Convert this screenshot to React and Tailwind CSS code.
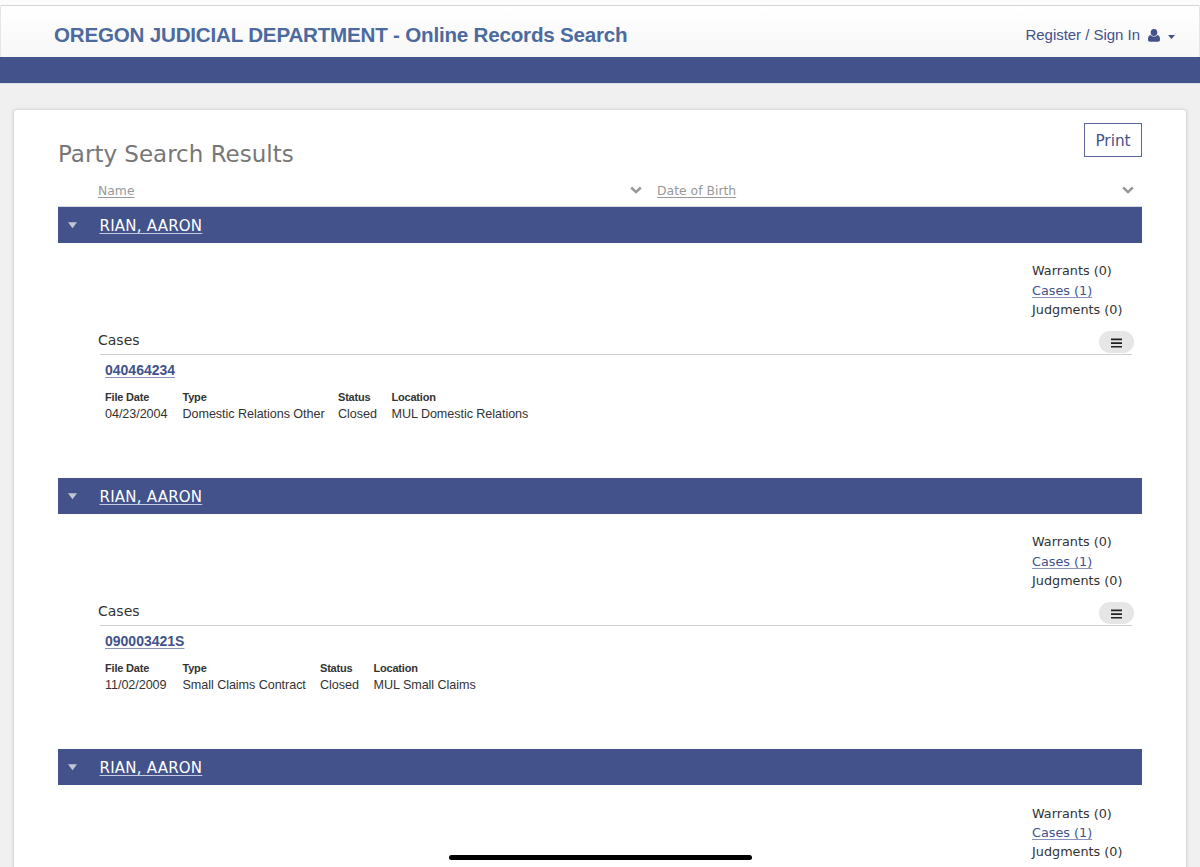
const helv = "font-['Liberation_Sans',Arial,sans-serif]";
const verd = "font-['DejaVu_Sans',Verdana,sans-serif]";

const parties = [
  {
    name: "RIAN, AARON",
    number: "040464234",
    fields: [
      ["File Date", "04/23/2004", "w-[77.5px]"],
      ["Type", "Domestic Relations Other", "w-[155.5px]"],
      ["Status", "Closed", "w-[53.5px]"],
      ["Location", "MUL Domestic Relations", "w-[160px]"],
    ],
  },
  {
    name: "RIAN, AARON",
    number: "090003421S",
    fields: [
      ["File Date", "11/02/2009", "w-[77.5px]"],
      ["Type", "Small Claims Contract", "w-[137.5px]"],
      ["Status", "Closed", "w-[53.5px]"],
      ["Location", "MUL Small Claims", "w-[160px]"],
    ],
  },
  { name: "RIAN, AARON" },
];

function UserIcon() {
  return (
    <svg className="ml-2 h-[13px] w-3 shrink-0" viewBox="0 0 12 13" fill="#43528a">
      <ellipse cx="6" cy="3.500" rx="3.300" ry="3.500" />
      <path d="M2.500 5.900C4.500 8.100 7.500 8.100 9.500 5.900 11.400 6.300 12 8.200 12 10.600 12 12 11.200 12.800 10 12.800H2C.8 12.800 0 12 0 10.600 0 8.200.6 6.300 2.500 5.900z" />
    </svg>
  );
}

function Chevron() {
  return (
    <svg className="-mt-px h-2 w-3 shrink-0" viewBox="0 0 12 8" fill="none" stroke="#979797" strokeWidth="2.5">
      <path d="M1.200 1.500 6 6.100l4.800-4.600" />
    </svg>
  );
}

function Party({ party }) {
  return (
    <section className="h-[271.200px] shrink-0">
      <div className="flex h-9 items-center bg-[#43528a] pl-2.5">
        <svg className="h-[7px] w-[9px]" viewBox="0 0 9 7">
          <path d="M0 .2h9L4.500 6.200z" fill="#c3c6d3" />
        </svg>
        <a className={`${verd} mt-0.5 ml-[22.5px] text-[15px] leading-5 tracking-[0.23px] whitespace-nowrap text-white underline decoration-[#c5cae0] decoration-1 underline-offset-2`}>
          {party.name}
        </a>
      </div>
      <div className={`${verd} ml-[974px] pt-[18.300px] text-[12.800px] leading-[19.3px] whitespace-nowrap text-[#333]`}>
        <div>Warrants (0)</div>
        <div>
          <a className="text-[#43528a] underline decoration-[#8a95bd] decoration-1 underline-offset-2">Cases (1)</a>
        </div>
        <div>Judgments (0)</div>
      </div>
      {party.number && (
        <div className="mt-[11.700px] ml-10">
          <div className="mr-2 flex h-[22px] items-start justify-between">
            <h2 className={`${verd} text-[14px] leading-[19px] text-[#333]`}>Cases</h2>
            <button className="flex h-[22px] w-[35px] items-center justify-center rounded-full bg-[#e6e6e6] pt-0.5">
              <svg className="h-[10px] w-[11px]" viewBox="0 0 11 10" fill="#222">
                <path d="M0 .5h11v1.700H0zM0 4.200h11v1.700H0zM0 7.900h11v1.700H0z" />
              </svg>
            </button>
          </div>
          <div className="mt-px mr-2.5 ml-0.5 h-px bg-[#cdd1cf]" />
          <div className={`${helv} ml-[7px]`}>
            <div className="pt-[7px] text-sm leading-4 font-bold">
              <a className="text-[#43528a] underline decoration-[#8a95bd] decoration-1 underline-offset-2">{party.number}</a>
            </div>
            <div className="mt-3 flex whitespace-nowrap text-[#333]">
              {party.fields.map(([label, value, width]) => (
                <div key={label} className={`${width} shrink-0`}>
                  <div className="text-[11px] leading-[14px] font-bold tracking-[-0.2px]">{label}</div>
                  <div className="mt-0.5 text-[12.6px] leading-4 tracking-[-0.06px]">{value}</div>
                </div>
              ))}
            </div>
          </div>
        </div>
      )}
    </section>
  );
}

export default function App() {
  return (
    <div className="relative flex h-[867px] w-[1200px] flex-col overflow-hidden bg-[#f0f0f0]">
      <div className="h-[5px] shrink-0 bg-[#fcfcfc]" />
      <header className={`${helv} flex h-[52px] shrink-0 items-center justify-between rounded-t-[2px] border border-b-0 border-[#d3d3d3] border-x-[#e6e6e6] bg-linear-to-b from-white to-[#f7f7f7] pt-[7px] pr-6 pl-[53px]`}>
        <h1 className="text-[20.6px] leading-6 font-bold tracking-[-0.21px] whitespace-nowrap text-[#4c6a9e]">
          OREGON JUDICIAL DEPARTMENT - Online Records Search
        </h1>
        <div className="flex items-center whitespace-nowrap text-[#43528a]">
          <span className="text-[15px] leading-5 tracking-[-0.03px]">Register / Sign In</span>
          <UserIcon />
          <svg className="mt-1 ml-2 h-[4px] w-[7px]" viewBox="0 0 7 4" fill="#43528a">
            <path d="M0 0h7L3.500 4z" />
          </svg>
        </div>
      </header>
      <div className="h-[26px] shrink-0 bg-[#43528a]" />
      <div className="h-px shrink-0 bg-[#dfe0e6]" />
      <main className="mx-[14px] mt-[26px] flex h-[900px] shrink-0 flex-col rounded-t-[3px] bg-white pr-[44px] pl-[44px] shadow-[0_0_3px_1px_rgba(0,0,0,0.13)]">
        <div className="flex h-[70px] shrink-0 items-start justify-between pt-[13px]">
          <h2 className={`${verd} mt-4 text-[23px] leading-[30px] whitespace-nowrap text-[#777]`}>Party Search Results</h2>
          <button className={`${verd} flex h-[34px] w-[58px] items-center justify-center border border-[#5b689a] pt-0.5 text-[15.3px] text-[#43528a]`}>
            Print
          </button>
        </div>
        <div className={`${verd} flex h-[27px] shrink-0 items-center border-b border-[#d5d8de] pb-1 pl-10 text-[12.4px] whitespace-nowrap text-[#999]`}>
          <div className="flex w-[559px] items-center justify-between pr-[15px]">
            <a className="underline decoration-1 underline-offset-2">Name</a>
            <Chevron />
          </div>
          <div className="flex flex-1 items-center justify-between pr-2">
            <a className="underline decoration-1 underline-offset-2">Date of Birth</a>
            <Chevron />
          </div>
        </div>
        {parties.map((party, i) => (
          <Party key={i} party={party} />
        ))}
      </main>
      <div className="absolute top-[855px] left-[448.500px] h-[5px] w-[303px] rounded-full bg-black" />
    </div>
  );
}
